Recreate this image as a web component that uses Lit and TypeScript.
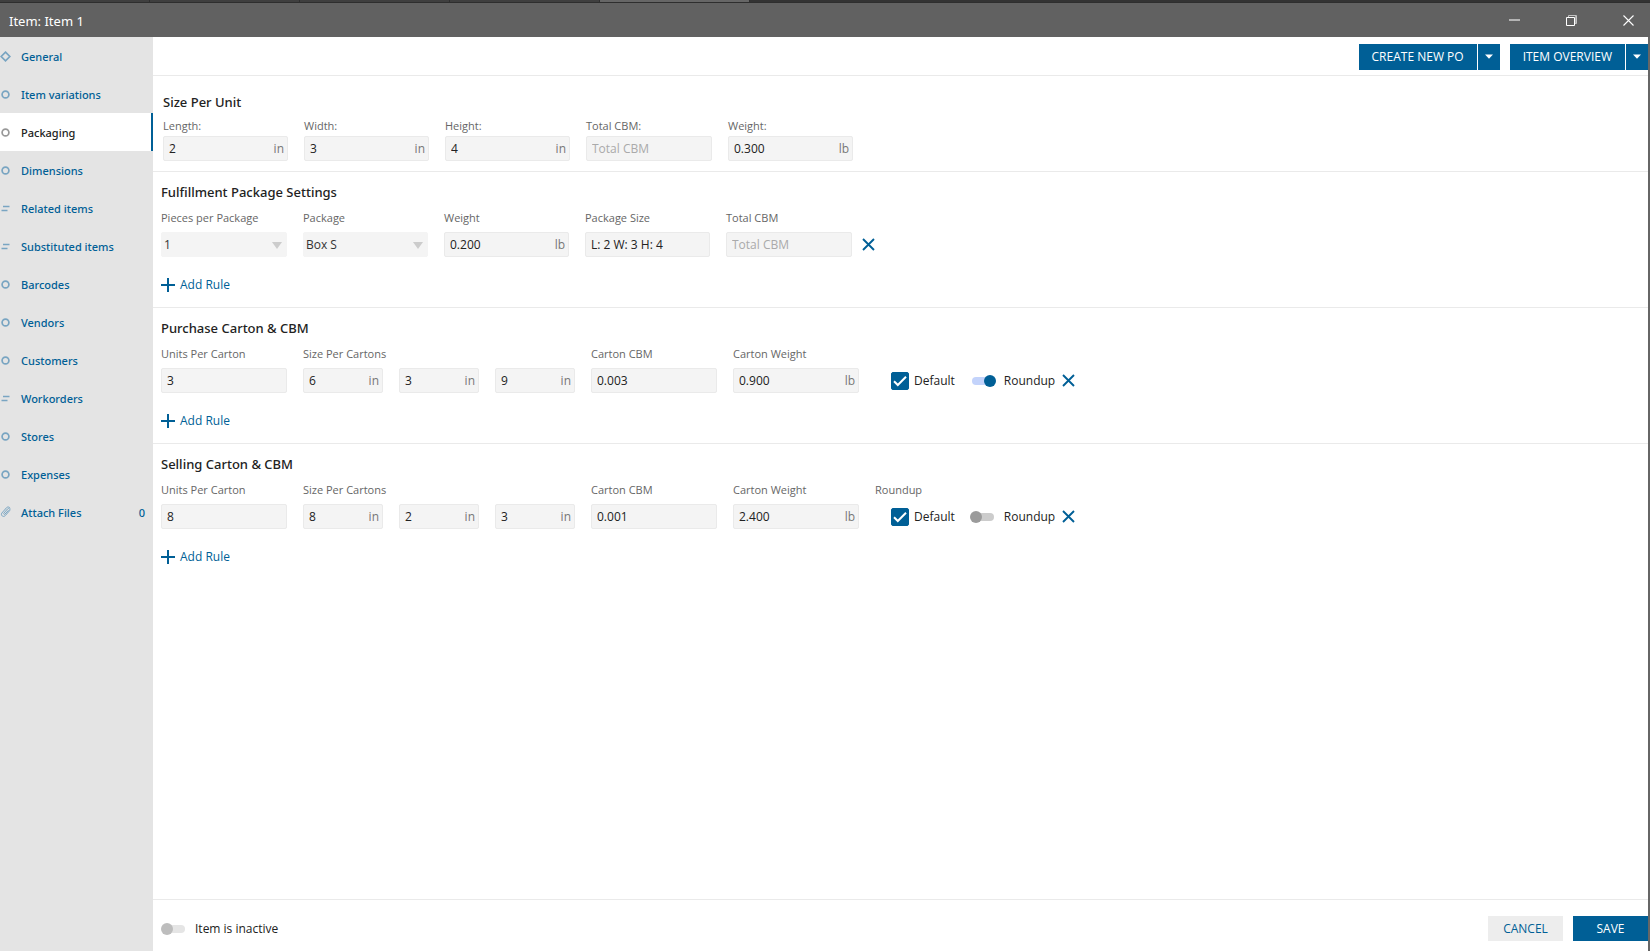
import { LitElement, html, css, svg, nothing } from "lit";
import { customElement, property } from "lit/decorators.js";
import { classMap } from "lit/directives/class-map.js";

type IconName = "diamond" | "circle" | "lines" | "clip" | "plus" | "cross" | "caret" | "arrow" | "minimize" | "restore" | "close" | "check";

const shapes: Record<IconName, { w: number; h: number; body: unknown }> = {
  diamond: { w: 11, h: 11, body: svg`<path d="M5.5 1.2 9.8 5.5 5.5 9.8 1.2 5.5Z" fill="none" stroke="currentColor" stroke-width="1.7"/>` },
  circle: { w: 11, h: 11, body: svg`<circle cx="5.5" cy="5.5" r="3.4" fill="none" stroke="currentColor" stroke-width="1.7"/>` },
  lines: { w: 11, h: 11, body: svg`<path d="M3 3.5H9.5M1.5 7.5H7.5" fill="none" stroke="currentColor" stroke-width="1.4"/>` },
  clip: { w: 11, h: 12, body: svg`<path d="M8.6 4.2 4.9 8.2C4.3 8.8 3.2 8 3.9 7.1L7.6 2.9C8.8 1.6 10.8 3.2 9.5 4.8L5.2 9.7C3.4 11.6.3 9.4 1.8 7.1L6.6 1.6C7.6.6 9.6.8 10.2 2.4" fill="none" stroke="currentColor" stroke-width="1"/>` },
  plus: { w: 14, h: 14, body: svg`<path d="M7 0V14M0 7H14" fill="none" stroke="currentColor" stroke-width="2"/>` },
  cross: { w: 13, h: 13, body: svg`<path d="M1 1 12 12M12 1 1 12" fill="none" stroke="currentColor" stroke-width="1.9"/>` },
  caret: { w: 8, h: 5, body: svg`<path d="M0 .5H8L4 4.8Z" fill="currentColor"/>` },
  arrow: { w: 10, h: 7, body: svg`<path d="M0 0H10L5 7Z" fill="currentColor"/>` },
  minimize: { w: 11, h: 11, body: svg`<path d="M0 5H11" fill="none" stroke="#b4b4b4" stroke-width="2"/>` },
  restore: { w: 11, h: 11, body: svg`<path d="M2.5 2.5V.5H10.5V8.5H8.5" fill="none" stroke="#c4c4c4"/><path d="M9.5 1V8" stroke="#aaa"/><path d="M.5 2.5H8.5V10.5H.5Z" fill="none" stroke="#fff"/>` },
  close: { w: 11, h: 11, body: svg`<path d="M.5.5 10.5 10.5M10.5.5.5 10.5" fill="none" stroke="#fff" stroke-width="1.1"/>` },
  check: { w: 18, h: 18, body: svg`<path d="M3 9.2 6.8 13 15 4.8" fill="none" stroke="#fff" stroke-width="2"/>` },
};

const icon = (name: IconName) => {
  const s = shapes[name];
  return html`<svg class="icon" width=${s.w} height=${s.h} viewBox="0 0 ${s.w} ${s.h}" aria-hidden="true">${s.body}</svg>`;
};

const base = css`
  * { box-sizing: border-box; }
  .icon { display: block; flex: none; }
  button, input, select { font: inherit; color: inherit; margin: 0; }
  button { border: 0; padding: 0; background: none; cursor: pointer; }
`;

interface Field {
  id: string;
  label?: string;
  name?: string;
  value?: string;
  unit?: string;
  placeholder?: string;
  size?: "wide" | "narrow";
  select?: boolean;
}

@customElement("form-field")
export class FormField extends LitElement {
  @property({ attribute: false }) field!: Field;

  static styles = [base, css`
    :host { display: flex; flex-direction: column; gap: var(--label-gap, 6px); }
    .label { font-size: 11px; line-height: 16px; height: 16px; color: #666; white-space: nowrap; width: 0; }
    .box {
      display: flex; align-items: center; width: 125px; height: 25px;
      background: #f4f4f4; border: 1px solid #eaeaea; border-radius: 2px;
    }
    .wide { width: 126px; }
    .narrow { width: 80px; }
    input {
      flex: 1; min-width: 0; width: 0; height: 100%; border: 0; outline: 0; background: none;
      padding: 0 0 0 5px; color: #222;
    }
    input::placeholder { color: #aaa; opacity: 1; }
    .unit { color: #777; padding-right: 3px; }
    .select { border-color: #f4f4f4; color: #ccc; display: grid; grid-template-columns: 1fr 10px 4px; }
    select {
      grid-area: 1 / 1 / 2 / 4; appearance: none; height: 100%; border: 0; outline: 0; background: none;
      padding: 0 0 0 2px; color: #333;
    }
    .arrow { grid-area: 1 / 2; pointer-events: none; padding-top: 2px; }
  `];

  render() {
    const f = this.field;
    const size = { wide: f.size === "wide", narrow: f.size === "narrow" };
    return html`
      <label class="label" for=${f.id}>${f.label ?? nothing}</label>
      ${f.select
        ? html`<div class=${classMap({ box: true, select: true, ...size })}>
            <select id=${f.id}><option>${f.value}</option></select>
            <span class="arrow">${icon("arrow")}</span>
          </div>`
        : html`<div class=${classMap({ box: true, ...size })}>
            <input id=${f.id} type="text" .value=${f.value ?? ""} placeholder=${f.placeholder ?? ""}
              aria-label=${f.name ?? nothing} />
            ${f.unit ? html`<span class="unit">${f.unit}</span>` : nothing}
          </div>`}
    `;
  }
}

@customElement("toggle-switch")
export class ToggleSwitch extends LitElement {
  @property() label = "";
  @property({ type: Boolean }) checked = false;
  @property({ type: Boolean }) faded = false;

  static styles = [base, css`
    label { display: flex; align-items: center; gap: 8px; color: #222; white-space: nowrap; }
    input { appearance: none; width: 26px; height: 12px; display: flex; align-items: center; position: relative; }
    input::before { content: ""; position: absolute; inset: 2px; border-radius: 4px; background: #ccc; }
    input::after { content: ""; position: relative; width: 12px; height: 12px; border-radius: 50%; background: #9b9b9b; }
    input:checked { justify-content: flex-end; }
    input:checked::before { background: #c3d3fb; }
    input:checked::after { background: #005f96; }
    .faded input::before { background: #e5e5e5; }
    .faded input::after { background: #bdbdbd; }
  `];

  render() {
    return html`<label class=${classMap({ faded: this.faded })}>
      <input type="checkbox" role="switch" .checked=${this.checked} />${this.label}
    </label>`;
  }
}

const nav: { text: string; icon: IconName; active?: boolean; count?: number }[] = [
  { text: "General", icon: "diamond" },
  { text: "Item variations", icon: "circle" },
  { text: "Packaging", icon: "circle", active: true },
  { text: "Dimensions", icon: "circle" },
  { text: "Related items", icon: "lines" },
  { text: "Substituted items", icon: "lines" },
  { text: "Barcodes", icon: "circle" },
  { text: "Vendors", icon: "circle" },
  { text: "Customers", icon: "circle" },
  { text: "Workorders", icon: "lines" },
  { text: "Stores", icon: "circle" },
  { text: "Expenses", icon: "circle" },
  { text: "Attach Files", icon: "clip", count: 0 },
];

const unitFields: Field[] = [
  { id: "length", label: "Length:", value: "2", unit: "in" },
  { id: "width", label: "Width:", value: "3", unit: "in" },
  { id: "height", label: "Height:", value: "4", unit: "in" },
  { id: "cbm", label: "Total CBM:", placeholder: "Total CBM", size: "wide" },
  { id: "weight", label: "Weight:", value: "0.300", unit: "lb" },
];

const packageFields: Field[] = [
  { id: "pieces", label: "Pieces per Package", value: "1", select: true, size: "wide" },
  { id: "package", label: "Package", value: "Box S", select: true },
  { id: "weight", label: "Weight", value: "0.200", unit: "lb" },
  { id: "size", label: "Package Size", value: "L: 2 W: 3 H: 4" },
  { id: "cbm", label: "Total CBM", placeholder: "Total CBM", size: "wide" },
];

const cartonFields = (units: string, l: string, w: string, h: string, cbm: string, weight: string): Field[] => [
  { id: "units", label: "Units Per Carton", value: units, size: "wide" },
  { id: "length", label: "Size Per Cartons", value: l, unit: "in", size: "narrow" },
  { id: "width", name: "Carton width", value: w, unit: "in", size: "narrow" },
  { id: "height", name: "Carton height", value: h, unit: "in", size: "narrow" },
  { id: "cbm", label: "Carton CBM", value: cbm, size: "wide" },
  { id: "weight", label: "Carton Weight", value: weight, unit: "lb", size: "wide" },
];

@customElement("app-root")
export class AppRoot extends LitElement {
  static styles = [base, css`
    :host {
      display: flex; flex-direction: column; min-height: 100vh;
      font: 12px/16px "Open Sans", "Noto Sans", sans-serif; color: #222; background: #fff;
    }
    .title, .link, .heading { font-family: "Noto Sans", "Open Sans", sans-serif; }
    .tabs { display: flex; height: 3px; background: #333; border-bottom: 1px solid #2e2e2e; }
    .tab { width: 150px; background: #3f3f3f; border-right: 1px solid #2e2e2e; }
    .tab.current { background: #666; }
    .titlebar { display: flex; align-items: center; height: 34px; padding: 0 16px 0 9px; background: #616161; color: #fff; }
    .title { flex: 1; margin: 0; padding-top: 2px; font-size: 13px; line-height: 18px; font-weight: 400; }
    .controls { display: flex; gap: 46px; }
    .body { flex: 1; display: flex; }
    .sidebar { width: 153px; flex: none; background: #e4e4e4; }
    .link {
      display: flex; align-items: center; height: 38px; gap: 10px; padding-right: 8px;
      color: #005f96; font-size: 11px; font-weight: 500; text-decoration: none; white-space: nowrap;
    }
    .link .icon { color: #79a5c2; }
    .link.active { background: #fff; color: #222; border-right: 2px solid #005f96; }
    .link.active .icon { color: #999; }
    .text, .count { padding-top: 2px; }
    .text { flex: 1; }
    .main { flex: 1; min-width: 0; display: flex; flex-direction: column; border-right: 2px solid #666; }
    .toolbar { display: flex; justify-content: flex-end; align-items: center; gap: 10px; height: 39px; padding-top: 1px; border-bottom: 1px solid #eaeaea; }
    .split { display: flex; gap: 1px; }
    .button { height: 26px; padding: 0 13px; background: #005f96; color: #fff; white-space: nowrap; }
    .more { display: grid; place-items: center; width: 22px; height: 26px; background: #005f96; color: #fff; }
    .content { flex: 1; }
    .section { padding: 10px 8px 14px; border-bottom: 1px solid #eaeaea; }
    .section:last-child { border-bottom: 0; }
    .unit { padding: 16px 10px 10px; --label-gap: 2px; }
    .heading { margin: 0; font-size: 13px; line-height: 20px; font-weight: 500; }
    .row { display: flex; align-items: flex-end; gap: 16px; margin-top: 8px; }
    .unit .row { margin-top: 6px; }
    .remove { display: grid; place-items: center; height: 25px; width: 13px; color: #005f96; }
    .package .remove { margin-left: -6px; }
    .add { display: flex; align-items: center; gap: 5px; height: 16px; margin-top: 20px; color: #005f96; }
    .options { display: flex; flex-direction: column; gap: 6px; }
    .caption { height: 16px; font-size: 11px; color: #666; }
    .choices { display: flex; align-items: center; height: 25px; padding-left: 16px; }
    .default { display: flex; align-items: center; gap: 5px; margin-right: 15px; font-weight: 500; }
    .tick { display: grid; }
    .tick input { grid-area: 1 / 1; appearance: none; width: 18px; height: 18px; border: 1px solid #005f96; border-radius: 2px; }
    .tick input:checked { background: #005f96; }
    .tick .icon { grid-area: 1 / 1; pointer-events: none; visibility: hidden; z-index: 1; }
    .tick input:checked + .icon { visibility: visible; }
    .choices .remove { margin-left: 7px; }
    .footer { display: flex; align-items: center; gap: 10px; height: 52px; padding: 6px 0 0 8px; border-top: 1px solid #eaeaea; }
    .footer toggle-switch { flex: 1; }
    .action { width: 75px; height: 25px; background: #005f96; color: #fff; }
    .action.cancel { background: #ededed; color: #005f96; }
  `];

  private split(text: string) {
    return html`<div class="split">
      <button class="button" type="button">${text}</button>
      <button class="more" type="button" aria-label="${text} options">${icon("caret")}</button>
    </div>`;
  }

  private fields(list: Field[]) {
    return list.map((f) => html`<form-field .field=${f}></form-field>`);
  }

  private addRule() {
    return html`<button class="add" type="button">${icon("plus")}Add Rule</button>`;
  }

  private remove() {
    return html`<button class="remove" type="button" aria-label="Remove rule">${icon("cross")}</button>`;
  }

  private carton(title: string, fields: Field[], roundup: boolean, caption = "") {
    return html`<section class="section">
      <h2 class="heading">${title}</h2>
      <div class="row">
        ${this.fields(fields)}
        <div class="options">
          <span class="caption">${caption}</span>
          <div class="choices">
            <label class="default">
              <span class="tick"><input type="checkbox" checked />${icon("check")}</span>Default
            </label>
            <toggle-switch label="Roundup" ?checked=${roundup}></toggle-switch>
            ${this.remove()}
          </div>
        </div>
      </div>
      ${this.addRule()}
    </section>`;
  }

  render() {
    return html`
      <div class="tabs">
        ${[0, 1, 2, 3, 4].map((i) => html`<span class=${classMap({ tab: true, current: i === 4 })}></span>`)}
      </div>
      <header class="titlebar">
        <h1 class="title">Item: Item 1</h1>
        <div class="controls">
          <button type="button" aria-label="Minimize">${icon("minimize")}</button>
          <button type="button" aria-label="Restore">${icon("restore")}</button>
          <button type="button" aria-label="Close">${icon("close")}</button>
        </div>
      </header>
      <div class="body">
        <nav class="sidebar">
          ${nav.map((n) => html`<a class=${classMap({ link: true, active: !!n.active })} href="#">
            ${icon(n.icon)}<span class="text">${n.text}</span>
            ${n.count === undefined ? nothing : html`<span class="count">${n.count}</span>`}
          </a>`)}
        </nav>
        <main class="main">
          <div class="toolbar">${this.split("CREATE NEW PO")}${this.split("ITEM OVERVIEW")}</div>
          <div class="content">
            <section class="section unit">
              <h2 class="heading">Size Per Unit</h2>
              <div class="row">${this.fields(unitFields)}</div>
            </section>
            <section class="section package">
              <h2 class="heading">Fulfillment Package Settings</h2>
              <div class="row">${this.fields(packageFields)}${this.remove()}</div>
              ${this.addRule()}
            </section>
            ${this.carton("Purchase Carton & CBM", cartonFields("3", "6", "3", "9", "0.003", "0.900"), true)}
            ${this.carton("Selling Carton & CBM", cartonFields("8", "8", "2", "3", "0.001", "2.400"), false, "Roundup")}
          </div>
          <footer class="footer">
            <toggle-switch label="Item is inactive" faded></toggle-switch>
            <button class="action cancel" type="button">CANCEL</button>
            <button class="action" type="button">SAVE</button>
          </footer>
        </main>
      </div>
    `;
  }
}
